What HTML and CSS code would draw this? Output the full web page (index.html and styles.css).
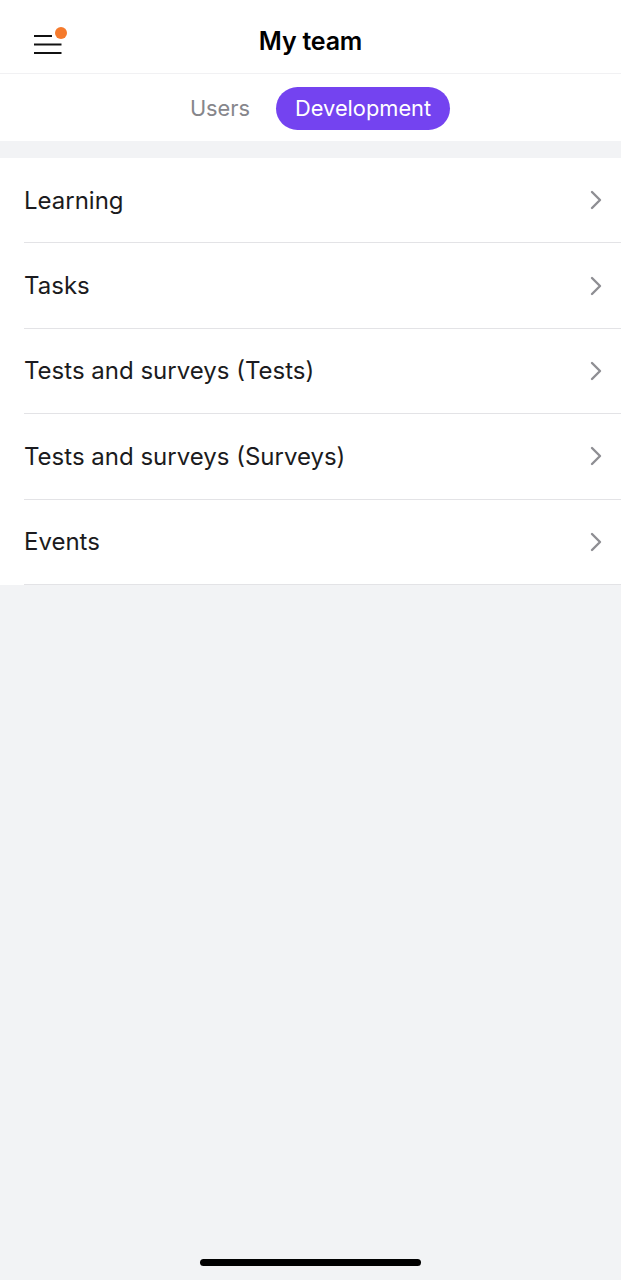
FILE: index.html
```html
<!DOCTYPE html>
<html lang="en">
<head>
<meta charset="utf-8">
<title>My team</title>
<link rel="stylesheet" href="styles.css">
</head>
<body>
<div class="app">
  <header class="topbar">
    <button class="menu" aria-label="Menu">
      <svg width="40" height="40" viewBox="0 0 40 40">
        <line x1="4" y1="16" x2="22" y2="16" stroke="#111" stroke-width="2"/>
        <line x1="4" y1="24.5" x2="31.5" y2="24.5" stroke="#111" stroke-width="2"/>
        <line x1="4" y1="33" x2="31.5" y2="33" stroke="#111" stroke-width="2"/>
      </svg>
      <span class="dot"></span>
    </button>
    <h1 class="title">My team</h1>
  </header>
  <nav class="tabs">
    <span class="tab">Users</span>
    <span class="tab active">Development</span>
  </nav>
  <ul class="list">
    <li class="row"><span>Learning</span><svg class="chev" width="14" height="20" viewBox="0 0 14 20"><polyline points="3,2 11,10 3,18" fill="none" stroke="#8e8e93" stroke-width="2.4" stroke-linecap="round" stroke-linejoin="round"/></svg></li>
    <li class="row"><span>Tasks</span><svg class="chev" width="14" height="20" viewBox="0 0 14 20"><polyline points="3,2 11,10 3,18" fill="none" stroke="#8e8e93" stroke-width="2.4" stroke-linecap="round" stroke-linejoin="round"/></svg></li>
    <li class="row"><span>Tests and surveys (Tests)</span><svg class="chev" width="14" height="20" viewBox="0 0 14 20"><polyline points="3,2 11,10 3,18" fill="none" stroke="#8e8e93" stroke-width="2.4" stroke-linecap="round" stroke-linejoin="round"/></svg></li>
    <li class="row"><span>Tests and surveys (Surveys)</span><svg class="chev" width="14" height="20" viewBox="0 0 14 20"><polyline points="3,2 11,10 3,18" fill="none" stroke="#8e8e93" stroke-width="2.4" stroke-linecap="round" stroke-linejoin="round"/></svg></li>
    <li class="row"><span>Events</span><svg class="chev" width="14" height="20" viewBox="0 0 14 20"><polyline points="3,2 11,10 3,18" fill="none" stroke="#8e8e93" stroke-width="2.4" stroke-linecap="round" stroke-linejoin="round"/></svg></li>
  </ul>
  <div class="spacer"></div>
  <div class="home-bar"><span class="home-indicator"></span></div>
</div>
</body>
</html>
```
FILE: styles.css
```css
* { box-sizing: border-box; }
html, body { margin: 0; padding: 0; }
body {
  background: #f2f3f5;
  font-family: Inter, "Noto Sans", "Liberation Sans", sans-serif;
  color: #1b1b20;
}
.app {
  min-height: 1280px;
  display: flex;
  flex-direction: column;
}
.topbar {
  height: 74px;
  background: #fff;
  border-bottom: 1px solid #f1f1f3;
  display: flex;
  align-items: center;
  justify-content: center;
  padding-top: 8px;
  position: relative;
}
.menu {
  position: absolute;
  left: 30px;
  top: 20px;
  width: 40px;
  height: 40px;
  padding: 0;
  border: 0;
  background: none;
}
.menu svg { display: block; }
.dot {
  position: absolute;
  left: 25px;
  top: 7px;
  width: 12px;
  height: 12px;
  border-radius: 50%;
  background: #f57a2c;
}
.title {
  margin: 0;
  font-size: 25px;
  font-weight: 600;
  color: #000;
  letter-spacing: -0.2px;
}
.tabs {
  height: 67px;
  background: #fff;
  display: flex;
  align-items: center;
  justify-content: center;
  gap: 26px;
  padding-left: 19px;
  padding-top: 2px;
}
.tab {
  font-size: 21.8px;
  color: #86868b;
  height: 43px;
  line-height: 43px;
  border-radius: 22px;
}
.tab.active {
  padding: 0 19px;
  background: #7443f0;
  color: #fff;
}
.list {
  list-style: none;
  margin: 17px 0 0;
  padding: 0 0 0 24px;
  background: #fff;
}
.row {
  height: 85.4px;
  display: flex;
  align-items: center;
  justify-content: space-between;
  padding-right: 18px;
  border-bottom: 1px solid #e3e3e6;
  font-size: 24px;
  color: #1b1b20;
}
.chev { display: block; }
.spacer { flex: 1; }
.home-bar {
  height: 30px;
  display: flex;
  justify-content: center;
  padding-top: 9px;
}
.home-indicator {
  width: 221px;
  height: 7px;
  border-radius: 4px;
  background: #000;
}
```
